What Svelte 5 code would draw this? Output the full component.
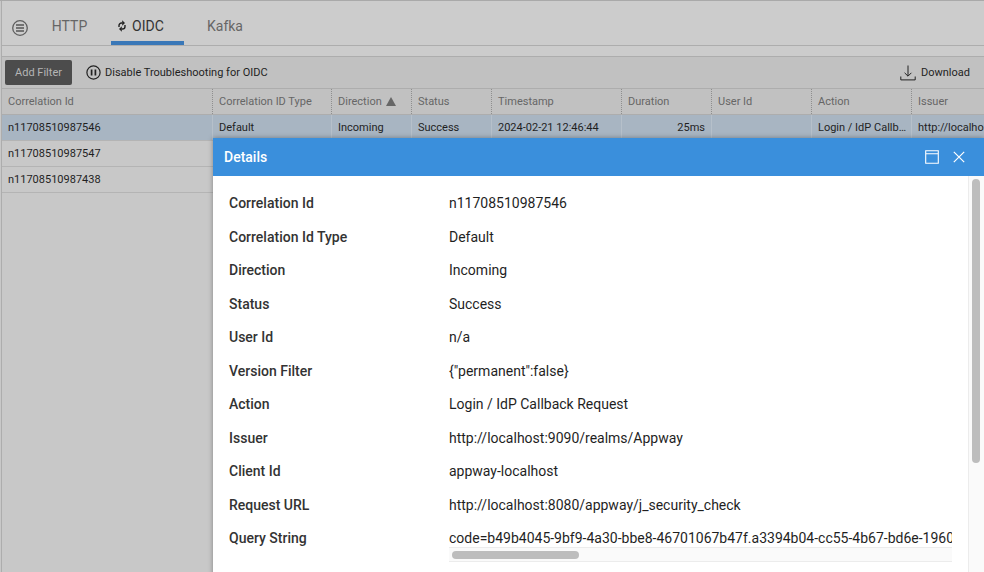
<script>
	const columns = [
		{ label: 'Correlation Id', width: 211 },
		{ label: 'Correlation ID Type', width: 119 },
		{ label: 'Direction', width: 80, sorted: true },
		{ label: 'Status', width: 80 },
		{ label: 'Timestamp', width: 130 },
		{ label: 'Duration', width: 90 },
		{ label: 'User Id', width: 100 },
		{ label: 'Action', width: 100 },
		{ label: 'Issuer', width: 120 }
	];

	const firstRow = [
		'n11708510987546',
		'Default',
		'Incoming',
		'Success',
		'2024-02-21 12:46:44',
		'25ms',
		'',
		'Login / IdP Callback Request',
		'http://localhost:9090/realms/Appway'
	];

	const otherIds = ['n11708510987547', 'n11708510987438'];

	const details = [
		['Correlation Id', 'n11708510987546'],
		['Correlation Id Type', 'Default'],
		['Direction', 'Incoming'],
		['Status', 'Success'],
		['User Id', 'n/a'],
		['Version Filter', '{"permanent":false}'],
		['Action', 'Login / IdP Callback Request'],
		['Issuer', 'http://localhost:9090/realms/Appway'],
		['Client Id', 'appway-localhost'],
		['Request URL', 'http://localhost:8080/appway/j_security_check']
	];

	const queryString =
		'code=b49b4045-9bf9-4a30-bbe8-46701067b47f.a3394b04-cc55-4b67-bd6e-1960a8f2c7d1.5e21c0aa-7f43-4d10-9b6c-2f8e61d0c3ab';
</script>

<div class="page">
	<div class="tabs">
		<svg class="menu" width="18" height="18" viewBox="0 0 18 18" aria-hidden="true">
			<circle cx="9" cy="9" r="7.3" fill="none" stroke="#5f5f5f" stroke-width="1.3" />
			<path d="M5 6h8M5 9h8M5 12h8" stroke="#555" stroke-width="1.7" fill="none" />
		</svg>
		<span class="tab http">HTTP</span>
		<span class="tab oidc">
			<svg width="8" height="12" viewBox="0 0 8 12" aria-hidden="true">
				<path d="M1 7V5.6A2.6 2.6 0 0 1 3.6 3H4.4M7 5v1.4A2.6 2.6 0 0 1 4.4 9H3.6" fill="none" stroke="#222" stroke-width="1.4" />
				<path d="M4.2 0.3 7 3 4.2 5.7zM3.8 6.3 1 9l2.8 2.7z" fill="#222" />
			</svg>
			OIDC
		</span>
		<span class="tab kafka">Kafka</span>
	</div>
	<div class="band"></div>
	<div class="toolbar">
		<button class="add">Add Filter</button>
		<span class="toggle">
			<svg width="15" height="15" viewBox="0 0 15 15" aria-hidden="true">
				<circle cx="7.5" cy="7.5" r="6.6" fill="none" stroke="#222" stroke-width="1.2" />
				<path d="M5.6 4.6v5.8M9.4 4.6v5.8" stroke="#222" stroke-width="1.7" fill="none" />
			</svg>
			Disable Troubleshooting for OIDC
		</span>
		<span class="download">
			<svg width="16" height="16" viewBox="0 0 16 16" aria-hidden="true">
				<path d="M8 0.5v10.5M4.6 7.8 8 11.2l3.4-3.4M0.8 11.5v3.4h14.4v-3.4" fill="none" stroke="#222" stroke-width="1" />
			</svg>
			Download
		</span>
	</div>

	<div class="grid">
		<div class="row head">
			{#each columns as col}
				<div class="cell" style="width: {col.width}px">
					{col.label}
					{#if col.sorted}<span class="arrow"></span>{/if}
				</div>
			{/each}
		</div>
		<div class="row selected">
			{#each firstRow as value, i}
				<div class="cell" class:right={columns[i].label === 'Duration'} style="width: {columns[i].width}px">
					{#if columns[i].label === 'Action'}
						<span class="clip">{value}</span>
					{:else}
						{value}
					{/if}
				</div>
			{/each}
		</div>
		{#each otherIds as id}
			<div class="row">
				<div class="cell" style="width: {columns[0].width}px">{id}</div>
			</div>
		{/each}
	</div>

	<section class="modal">
		<header>
			<h2>Details</h2>
			<svg width="14" height="14" viewBox="0 0 14 14" aria-hidden="true">
				<path d="M.7.7h12.6v12.6H.7zM.7 3.7h12.6" fill="none" stroke="#fff" stroke-width="1.1" />
			</svg>
			<svg class="close" width="12" height="12" viewBox="0 0 12 12" aria-hidden="true">
				<path d="M.8.8l10.4 10.4M11.2.8.8 11.2" fill="none" stroke="#fff" stroke-width="1.2" />
			</svg>
		</header>
		<div class="body">
			<div class="fields">
				{#each details as [label, value]}
					<div class="field">
						<span class="label">{label}</span>
						<span class="value">{value}</span>
					</div>
				{/each}
				<div class="field query">
					<span class="label">Query String</span>
					<div class="scroller">
						<span class="value">{queryString}</span>
						<div class="hbar"><div class="hthumb"></div></div>
					</div>
				</div>
			</div>
			<div class="vbar"><div class="vthumb"></div></div>
		</div>
	</section>
</div>

<style>
	:global(body) {
		margin: 0;
		background: #c8c8c8;
		overflow: hidden;
	}

	.page {
		position: relative;
		display: flex;
		flex-direction: column;
		width: 984px;
		height: 572px;
		overflow: hidden;
		box-sizing: border-box;
		border-top: 1px solid #a9a9a9;
		padding-left: 1px;
		background: #c8c8c8;
		font-family: Roboto, sans-serif;
		font-size: 11px;
		color: #1f1f1f;
	}

	.tabs {
		display: flex;
		flex: none;
		align-items: flex-start;
		height: 45px;
		box-sizing: border-box;
		border-bottom: 1px solid #adadad;
		border-left: 1px solid #adadad;
		background: #cccccc;
	}

	.menu {
		margin: 18px 0 0 9px;
	}

	.tab {
		display: flex;
		align-items: center;
		justify-content: center;
		height: 44px;
		box-sizing: border-box;
		padding-top: 6px;
		font-size: 14px;
		color: #666;
	}

	.http {
		width: 82px;
		padding-right: 1px;
	}

	.oidc {
		width: 73px;
		justify-content: flex-start;
		gap: 6px;
		padding-top: 10px;
		padding-left: 7px;
		color: #333;
		border-bottom: 4px solid #3a78b8;
	}

	.kafka {
		width: 82px;
	}

	.band {
		flex: none;
		height: 11px;
		box-sizing: border-box;
		background: #cccccc;
		border-left: 1px solid #adadad;
		border-bottom: 1px solid #adadad;
	}

	.toolbar {
		display: flex;
		flex: none;
		align-items: center;
		height: 32px;
		box-sizing: border-box;
		padding-left: 3px;
		background: #c1c1c1;
		border-left: 1px solid #adadad;
		border-bottom: 1px solid #adadad;
	}

	.add {
		width: 67px;
		height: 25px;
		padding: 0;
		border: none;
		border-radius: 2px;
		background: #4c4c4c;
		color: #b5b5b5;
		font: inherit;
	}

	.toggle {
		display: flex;
		align-items: center;
		gap: 4px;
		margin-left: 14px;
	}

	.download {
		display: flex;
		align-items: center;
		gap: 5px;
		margin-left: auto;
		margin-right: 14px;
	}

	.grid {
		flex: 1;
		border-left: 1px solid #adadad;
	}

	.row {
		display: flex;
		height: 26px;
		box-sizing: border-box;
		border-bottom: 1px solid #b4b4b4;
		width: 212px;
	}

	.row.head,
	.row.selected {
		width: 982px;
	}

	.head {
		background: #c1c1c1;
		border-bottom: 1px solid #adadad;
		color: #666;
	}

	.head .cell {
		border-right: 1px dotted #8f8f8f;
	}

	.selected {
		background: #a8b5c2;
	}

	.selected .cell {
		border-right: 1px solid #b6c0ca;
	}

	.cell {
		display: flex;
		align-items: center;
		flex: none;
		box-sizing: border-box;
		padding: 0 4px 0 6px;
		white-space: nowrap;
		overflow: hidden;
	}

	.cell.right {
		justify-content: flex-end;
		padding-right: 6px;
	}

	.clip {
		overflow: hidden;
		text-overflow: ellipsis;
	}

	.arrow {
		width: 0;
		height: 0;
		margin-left: 4px;
		border-left: 5px solid transparent;
		border-right: 5px solid transparent;
		border-bottom: 9px solid #666;
	}

	.modal {
		position: absolute;
		left: 213px;
		top: 137px;
		width: 771px;
		height: 440px;
		background: #fff;
		box-shadow: 0 0 5px rgba(0, 0, 0, 0.35);
	}

	header {
		display: flex;
		align-items: center;
		height: 38px;
		padding: 0 19px 0 11px;
		box-sizing: border-box;
		background: #3a8fdc;
	}

	h2 {
		margin: 0 auto 0 0;
		color: #fff;
		font-size: 14px;
		font-weight: 500;
	}

	.close {
		margin-left: 14px;
	}

	.body {
		display: flex;
		height: 396px;
		padding: 10.4px 0 0 16px;
		box-sizing: border-box;
		position: relative;
	}

	.fields {
		width: 724px;
		font-size: 14px;
	}

	.field {
		display: flex;
		height: 33.5px;
		align-items: center;
	}

	.label {
		flex: none;
		width: 220px;
		font-weight: 500;
		color: #333;
	}

	.value {
		white-space: nowrap;
	}

	.query {
		align-items: flex-start;
		padding-top: 9px;
		box-sizing: border-box;
	}

	.scroller {
		width: 503px;
		overflow: hidden;
	}

	.hbar {
		height: 15px;
		margin-top: 1px;
		box-sizing: border-box;
		background: #fafafa;
		border: solid #ececec;
		border-width: 1px 0;
		display: flex;
		align-items: center;
		padding-left: 3px;
	}

	.hthumb {
		width: 127px;
		height: 8px;
		border-radius: 4px;
		background: #bdbdbd;
	}

	.vbar {
		position: absolute;
		right: 0;
		top: 0;
		width: 16px;
		height: 100%;
		box-sizing: border-box;
		border-left: 1px solid #ececec;
		background: #fafafa;
	}

	.vthumb {
		width: 8px;
		height: 284px;
		margin: 3px 0 0 3px;
		border-radius: 4px;
		background: #bdbdbd;
	}
</style>
